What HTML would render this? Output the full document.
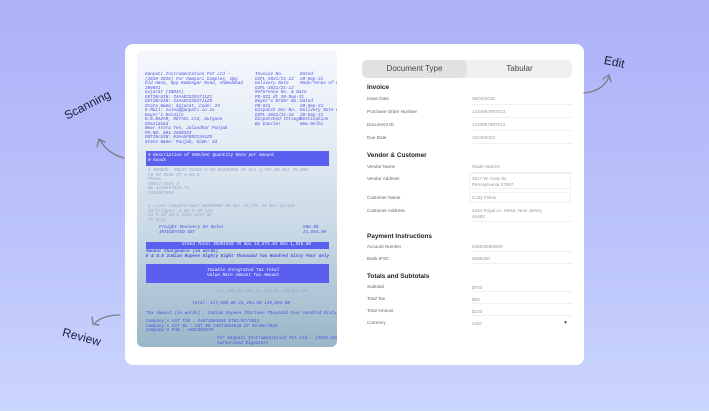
<!DOCTYPE html><html><head><meta charset="utf-8"><style>
*{margin:0;padding:0;box-sizing:border-box}
body{width:709px;height:411px;overflow:hidden;background:linear-gradient(180deg,#adb1f8 0%,#bcc4fb 60%,#cbd6fd 100%);font-family:"Liberation Sans",sans-serif;position:relative}
.a{position:absolute}
.card{left:125px;top:44px;width:459px;height:321px;background:#fff;border-radius:8px}
.doc{left:137px;top:50px;width:200px;height:297px;border-radius:6px;background:linear-gradient(180deg,#f5f7fd 0%,#e4ecf5 30%,#c5d6e3 65%,#9ab6c9 100%);overflow:hidden}
.d{position:absolute;font:italic 4.3px "Liberation Mono",monospace;color:#4a4fe0;white-space:nowrap;line-height:4.5px}
.g{color:#9aa3c8}
.blue{position:absolute;background:#5b5ff0}
.lbl{position:absolute;left:367px;font-size:4.6px;color:#666}
.val{position:absolute;left:472px;font-size:4.6px;color:#999}
.ln{position:absolute;left:472px;width:100px;height:1px;background:#f0f0f0}
.h{position:absolute;left:367px;font-size:6.4px;color:#222;font-weight:bold}
.lab{position:absolute;font-size:12px;color:#1e1e3a}
</style></head><body>
<div class="a card"></div>
<div class="a doc">
<div class="d" style="left:8px;top:23px">Ganpati Instrumentation Pvt Ltd -<br>(2018-2020) Fur Rampuri Complex, Opp<br>Old Hans, Opp Kamnagar Road, Ahmedabad<br>380051<br>Gujarat (INDIA)<br>GSTIN/UIN: 24AAECG2837J1Z1<br>GSTIN/UIN: 24AAECG2837J1Z9<br>State Name: Gujarat, Code: 24<br>E-Mail: sales@ganpati.co.in<br>Buyer's Details<br>B.B.BAZAR, RETAIL Ltd, Gurgaon<br>Ghaziabad<br>Near Arora Tex, Jalandhar Punjab<br>PH.NO. 081-2650352<br>GSTIN/UIN: 03AAXFB9213A1Z5<br>State Name: Punjab, Code: 03</div>
<div class="d" style="left:118px;top:23px">Invoice No.<br>GIPL-2021/21-12<br>Delivery Note<br>GIPL-2021/21-12<br>Reference No. &amp; Date<br>PO-S21 dt 20-Sep-21<br>Buyer's Order No.<br>PO-S21<br>Dispatch Doc No.<br>GIPL-2021/21-10<br>Dispatched through<br>By Courier</div>
<div class="d" style="left:163px;top:23px">Dated<br>20-Sep-21<br>Mode/Terms of Payment<br><br><br><br>Dated<br>20-Sep-21<br>Delivery Note Date<br>20-Sep-21<br>Destination<br>New Delhi</div>
<div class="blue" style="left:9px;top:101px;width:183px;height:15px"></div>
<div class="d" style="left:11px;top:104px;color:#fff">S  Description of    HSN/SAC  Quantity Rate  per Amount<br>N  Goods</div>
<div class="d g" style="left:11px;top:119px">1  BRONZE- INLET GUIDE-D-09  90328000  25 Nos  3,702.00 Nos 79,000<br>   LR NO 2540 DT 0-04-5<br>   Phase<br>   40012-2101-2<br>   No 1234567822 To<br>   1234567894</div>
<div class="d g" style="left:11px;top:155px">2  Loose Lanyard Dust  90328000  50 Nos  15,871.54 Nos 12,015<br>   Cartridges, 4.0A P.NP 123<br>   AA P.NN 10.5 Inch with Wr<br>   7Y Only</div>
<div class="d" style="left:22px;top:176px">Freight Recovery On Sales<br>    INTEGRATED GST</div>
<div class="d" style="left:166px;top:176px">500.00<br>21,864.00</div>
<div class="blue" style="left:9px;top:192px;width:183px;height:7px"></div>
<div class="d" style="left:45px;top:193px;color:#fff">Grand Total 30261520 75 Nos 15,871.54 Nos 1,516.00</div>
<div class="d" style="left:9px;top:200px;font-weight:bold">Amount Chargeable (in words)<br>E &amp; O.E Indian Rupees Eighty Eight Thousand Two Hundred Sixty Four Only</div>
<div class="blue" style="left:9px;top:214px;width:183px;height:19px"></div>
<div class="d" style="left:70px;top:219px;color:#fff">Taxable    Integrated Tax       Total<br>Value     Rate   Amount   Tax Amount</div>
<div class="d g" style="left:80px;top:240px">127,560.00    18%  21,864.00   149,864.00</div>
<div class="d" style="left:55px;top:252px">Total: 127,560.00     21,464.00   149,864.00</div>
<div class="d" style="left:9px;top:262px">Tax Amount (in words) : Indian Rupees Thirteen Thousand Four Hundred Sixty Four Only</div>
<div class="d" style="left:9px;top:270px">Company's VAT TIN : 24073603636 DT01/07/2012<br>Company's CST No : CST NO.24073603636 DT 26/08/2016<br>Company's PAN : AAECG5587H</div>
<div class="d" style="left:80px;top:287px">for Ganpati Instrumentation Pvt Ltd - (2018-2020)<br>                         Authorised Signatory</div>
</div>
<!-- right panel -->
<div class="a" style="left:362px;top:60px;width:210px;height:18px;background:#f1f0f0;border-radius:5px"></div>
<div class="a" style="left:362px;top:60px;width:105px;height:18px;background:#e3e1e1;border-radius:5px"></div>
<div class="a" style="left:362px;top:64px;width:105px;text-align:center;font-size:8px;color:#444">Document Type</div>
<div class="a" style="left:467px;top:64px;width:105px;text-align:center;font-size:8px;color:#444">Tabular</div>
<div class="h" style="top:84px">Invoice</div>
<div class="lbl" style="top:96px">Issue Date</div><div class="val" style="top:96px">08/04/2015</div><div class="ln" style="top:104px"></div>
<div class="lbl" style="top:109px">Purchase Order Number</div><div class="val" style="top:109px">1234567897313</div><div class="ln" style="top:117px"></div>
<div class="lbl" style="top:122px">Document ID</div><div class="val" style="top:122px">1234567897313</div><div class="ln" style="top:130px"></div>
<div class="lbl" style="top:135px">Due Date</div><div class="val" style="top:135px">10/09/2023</div><div class="ln" style="top:143px"></div>
<div class="h" style="top:152px">Vendor &amp; Customer</div>
<div class="lbl" style="top:164px">Vendor Name</div><div class="val" style="top:164px">Wade Warren</div><div class="ln" style="top:172px"></div>
<div class="lbl" style="top:176px">Vendor Address</div><div class="val" style="top:176px;line-height:6px">3517 W. Gray St.<br>Pennsylvania 57867</div>
<div class="a" style="left:469px;top:173px;width:102px;height:16px;border:1px solid #f0f0f0"></div>
<div class="lbl" style="top:195px">Customer Name</div><div class="val" style="top:195px">Cody Fisher</div>
<div class="a" style="left:469px;top:192px;width:102px;height:11px;border:1px solid #f0f0f0"></div>
<div class="lbl" style="top:208px">Customer Address</div><div class="val" style="top:208px;line-height:6px">2464 Royal Ln. Mesa, New Jersey<br>45463</div>
<div class="ln" style="top:221px"></div>
<div class="h" style="top:233px">Payment Instructions</div>
<div class="lbl" style="top:244px">Account Number</div><div class="val" style="top:244px">635000089009</div><div class="ln" style="top:251px"></div>
<div class="lbl" style="top:256px">Bank IFSC</div><div class="val" style="top:256px">5589000</div><div class="ln" style="top:263px"></div>
<div class="h" style="top:273px">Totals and Subtotals</div>
<div class="lbl" style="top:284px">Subtotal</div><div class="val" style="top:285px">$750</div><div class="ln" style="top:291px"></div>
<div class="lbl" style="top:296px">Total Tax</div><div class="val" style="top:297px">$50</div><div class="ln" style="top:303px"></div>
<div class="lbl" style="top:308px">Total Amount</div><div class="val" style="top:309px">$220</div><div class="ln" style="top:315px"></div>
<div class="lbl" style="top:320px">Currency</div><div class="val" style="top:321px">USD</div>
<div class="a" style="left:563px;top:320px;font-size:5px;color:#555">▼</div>
<!-- labels & arrows -->
<div class="lab" style="left:62px;top:110px;transform:rotate(-27deg);transform-origin:left top">Scanning</div>
<div class="lab" style="left:62px;top:330px;transform:rotate(15deg)">Review</div>
<div class="lab" style="left:604px;top:55px;transform:rotate(12deg)">Edit</div>
<svg class="a" style="left:0;top:0" width="709" height="411" fill="none" stroke="#7c7c86" stroke-width="1.3" stroke-linecap="round">
<path d="M124 158 Q108 154 100 140"/><path d="M97 147 L99 139 L105 142"/>
<path d="M120 315 Q103 315 95 323"/><path d="M92 317 L93 324 L99 325"/>
<path d="M584 93 Q603 91 609 77"/><path d="M603 79 L609 75 L611 82"/>
</svg>
</body></html>
